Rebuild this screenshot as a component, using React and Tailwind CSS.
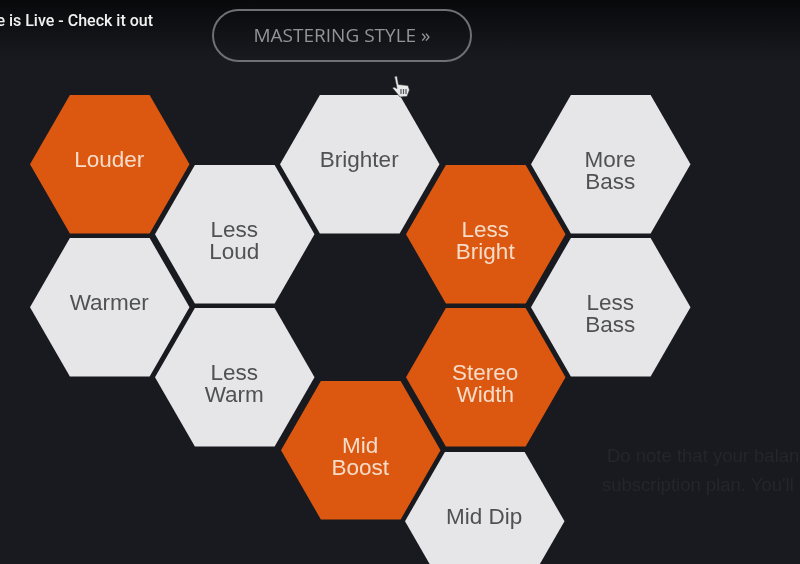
import React from 'react';

const hexes = [
  { lines: ['Louder'], pos: 'left-[30px] top-[95px]', on: true },
  { lines: ['Less', 'Loud'], pos: 'left-[155px] top-[165px]' },
  { lines: ['Brighter'], pos: 'left-[280px] top-[95px]' },
  { lines: ['Less', 'Bright'], pos: 'left-[406px] top-[165px]', on: true },
  { lines: ['More', 'Bass'], pos: 'left-[531px] top-[95px]' },
  { lines: ['Warmer'], pos: 'left-[30px] top-[238px]' },
  { lines: ['Less', 'Bass'], pos: 'left-[531px] top-[238px]' },
  { lines: ['Less', 'Warm'], pos: 'left-[155px] top-[308px]' },
  { lines: ['Stereo', 'Width'], pos: 'left-[406px] top-[308px]', on: true },
  { lines: ['Mid', 'Boost'], pos: 'left-[281px] top-[381px]', on: true },
  { lines: ['Mid Dip'], pos: 'left-[405px] top-[452px]' },
];

function Hex({ lines, pos, on }) {
  return (
    <div
      className={`absolute ${pos} h-[138.500px] w-[159.500px] flex flex-col items-center pt-[54px] pr-[1px] [clip-path:polygon(25%_0,75%_0,100%_50%,75%_100%,25%_100%,0_50%)] font-['Liberation_Sans',sans-serif] text-[22.500px] leading-[22px] ${on ? 'bg-[#dc5810] text-[#f6dcc9]' : 'bg-[#e6e6e8] text-[#505155]'}`}
    >
      {lines.map((l) => (
        <span key={l}>{l}</span>
      ))}
    </div>
  );
}

function HandCursor() {
  return (
    <svg className="absolute left-[391px] top-[75px]" width="20" height="24" viewBox="0 0 20 24">
      <path
        d="M3.500 1.500 6 1l1.500 8.500 9.500 1 1.500 4.500-2.500 6.500-7 .5L1.500 13l1.500-1 3 1.500z"
        fill="#e9e9ea"
        stroke="#2a2b2f"
        strokeWidth="0.6"
      />
      <path d="M10 14v5M12.500 14v5M15 14v5" stroke="#55565a" strokeWidth="1.200" />
    </svg>
  );
}

export default function App() {
  return (
    <div className="relative h-[564px] w-[800px] overflow-hidden bg-[#181a1f] blur-[0.3px]">
      <div className="absolute inset-x-0 top-0 h-[60px] bg-gradient-to-b from-[#08090b] to-transparent" />

      <div className="relative flex h-[62px] items-start">
        <p className="ml-[-60px] mt-[12px] w-[213px] shrink-0 whitespace-nowrap text-right font-['Roboto',sans-serif] text-[16px] font-medium leading-[18px] text-[#f1f1f1]">
          Update is Live - Check it out
        </p>
        <button className="ml-[59px] mt-[9px] flex h-[53px] w-[260px] items-center justify-center rounded-full border-2 border-[#6f7074] font-['Open_Sans',sans-serif] text-[19px] text-[#939496]">
          MASTERING STYLE »
        </button>
      </div>

      {hexes.map((h) => (
        <Hex key={h.pos} {...h} />
      ))}

      <HandCursor />

      <div className="absolute left-[602px] top-[441px] w-[198px] overflow-hidden font-['Liberation_Sans',sans-serif] text-[18.500px] leading-[29px] whitespace-nowrap text-[#242629]">
        <p className="ml-[5px]">Do note that your balance</p>
        <p>subscription plan. You'll</p>
      </div>
    </div>
  );
}
